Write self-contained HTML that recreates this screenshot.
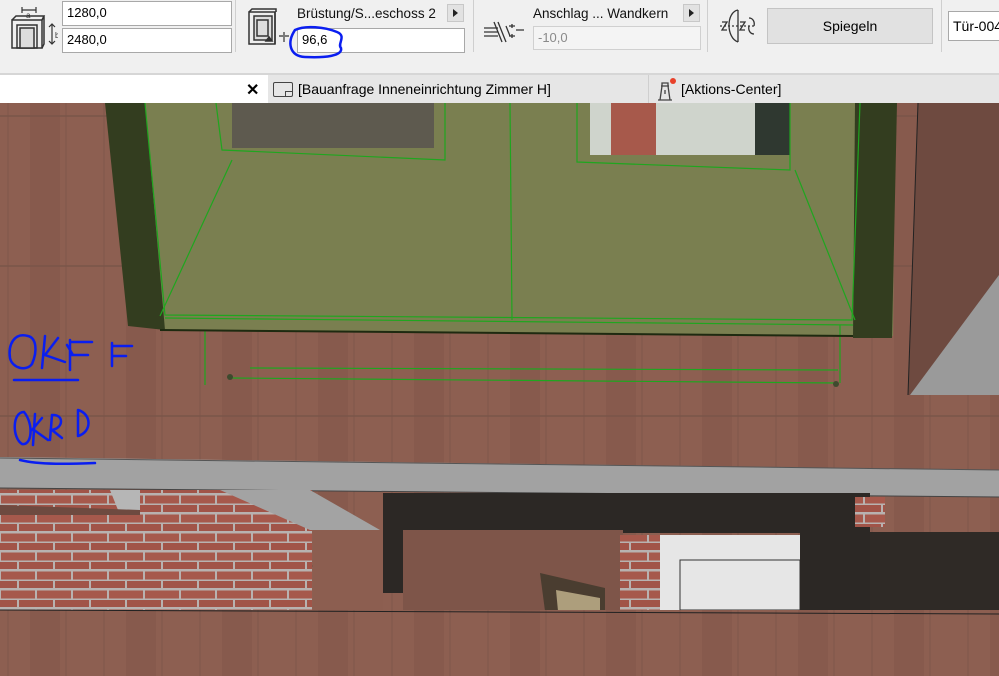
<!DOCTYPE html>
<html><head><meta charset="utf-8"><style>
body{margin:0;width:999px;height:676px;overflow:hidden;font-family:"Liberation Sans",sans-serif;background:#8a5d4f;position:relative}
.a{position:absolute}
.f{position:absolute;background:#fff;border:1px solid #a8a8a8;font-size:13px;line-height:22px;padding-left:4px;box-sizing:border-box;color:#000}
.sep{position:absolute;top:0;width:1px;height:52px;background:#cfcfcf}
.lbl{position:absolute;font-size:13.5px;color:#111}
.arr{position:absolute;width:17px;height:18px;background:#e2e2e2;border:1px solid #c8c8c8;box-sizing:border-box}
.arr:after{content:"";position:absolute;left:5px;top:4px;border-left:5px solid #222;border-top:4px solid transparent;border-bottom:4px solid transparent}
</style></head><body>
<div class="a" style="left:0;top:0;width:999px;height:74px;background:#f0f0f0"></div>
<div class="a" style="left:0;top:73px;width:999px;height:2px;background:#d6d6d6"></div>
<svg class="a" style="left:8px;top:2px" width="50" height="48" viewBox="0 0 50 48" fill="none" stroke="#333" stroke-width="1.5">
<rect x="4" y="18" width="30" height="28" fill="#eee"/><rect x="9" y="23" width="20" height="23"/><rect x="12" y="26" width="14" height="20" fill="#ddd"/>
<path d="M4 18l4-4h28l-2 4M36 14v28l-2 4" /><path d="M14 8h14M14 5v6M28 5v6M44 22v20M41 25l3-3 3 3M41 39l3 3 3-3" stroke-width="1.2"/>
<text x="18" y="16" font-size="8" fill="#333" stroke="none">a</text><text x="47" y="36" font-size="8" fill="#333" stroke="none">b</text></svg>
<div class="f" style="left:62px;top:1px;width:170px;height:25px">1280,0</div>
<div class="f" style="left:62px;top:28px;width:170px;height:25px">2480,0</div>
<div class="sep" style="left:235px"></div>
<svg class="a" style="left:247px;top:8px" width="45" height="40" viewBox="0 0 45 40" fill="none" stroke="#333" stroke-width="1.5">
<rect x="2" y="4" width="26" height="32" fill="#eee"/><rect x="7" y="8" width="18" height="24" fill="#ddd"/><rect x="10" y="12" width="11" height="16"/>
<path d="M2 4l3-3h24v3M28 4v32" /><path d="M32 28h10M37 24v3M37 29v5" stroke-width="1.2"/><path d="M22 29l3 4h-6z" fill="#333"/></svg>
<div class="lbl" style="left:297px;top:6px">Brüstung/S...eschoss 2</div>
<div class="arr" style="left:447px;top:4px"></div>
<div class="f" style="left:297px;top:28px;width:168px;height:25px">96,6</div>
<svg class="a" style="left:285px;top:22px" width="65" height="40"><path d="M10 8 C20 3,40 5,52 10 C62 14,52 22,56 26 C58 34,40 36,20 35 C4 34,2 20,10 8Z" fill="none" stroke="#0a1ef0" stroke-width="2.5"/></svg>
<div class="sep" style="left:473px"></div>
<svg class="a" style="left:482px;top:16px" width="45" height="30" viewBox="0 0 45 30" fill="none" stroke="#333" stroke-width="1.3">
<path d="M2 12h14M2 16h14M2 20h14M12 6l8 20M16 6l8 20M24 10l4 10M30 8v4M27 10h6M30 18v4M27 20h6M34 14h8"/></svg>
<div class="lbl" style="left:533px;top:6px">Anschlag ... Wandkern</div>
<div class="arr" style="left:683px;top:4px"></div>
<div class="f" style="left:533px;top:26px;width:168px;height:24px;background:#f4f4f4;color:#8a8a8a;border-color:#d0d0d0">-10,0</div>
<div class="sep" style="left:707px"></div>
<svg class="a" style="left:718px;top:6px" width="45" height="40" viewBox="0 0 45 40" fill="none" stroke="#333" stroke-width="1.3">
<path d="M20 4 C8 6,8 32,20 36 M20 4v32"/><path d="M2 20h34" stroke-dasharray="2 2"/><path d="M4 16h5l-5 8h5M22 16h5l-5 8h5M31 12c4 0,6 4,5 8M36 28c-4 0-6-4-5-8"/></svg>
<div class="a" style="left:767px;top:8px;width:166px;height:36px;background:#e1e1e1;border:1px solid #c4c4c4;box-sizing:border-box;font-size:14px;line-height:34px;text-align:center">Spiegeln</div>
<div class="sep" style="left:941px"></div>
<div class="f" style="left:948px;top:11px;width:60px;height:30px;line-height:28px;font-size:14px">Tür-004</div>
<div class="a" style="left:0;top:75px;width:268px;height:28px;background:#fff"></div>
<div class="a" style="left:246px;top:80px;font-size:16px;font-weight:bold">✕</div>
<div class="a" style="left:268px;top:75px;width:731px;height:28px;background:#e6e6e6"></div>
<div class="a" style="left:648px;top:75px;width:1px;height:28px;background:#cfcfcf"></div>
<div class="a" style="left:273px;top:82px;width:20px;height:15px;border:1.5px solid #444;border-radius:2px;box-sizing:border-box"></div>
<div class="a" style="left:285px;top:91px;width:8px;height:6px;border-top:1.5px solid #444;border-left:1.5px solid #444;box-sizing:border-box"></div>
<div class="a" style="left:298px;top:81px;font-size:14px">[Bauanfrage Inneneinrichtung Zimmer H]</div>
<svg class="a" style="left:654px;top:78px" width="24" height="24" fill="none" stroke="#444" stroke-width="1.3"><path d="M4 22h14M6 22l2-14h6l2 14M7 8h8M8 8V5h6v3M11 12v4"/><circle cx="19" cy="3" r="3" fill="#e8412a" stroke="none"/></svg>
<div class="a" style="left:681px;top:81px;font-size:14px">[Aktions-Center]</div>
<svg class="a" style="left:0;top:103px" width="999" height="573" viewBox="0 103 999 573">
<defs>
<pattern id="wood" width="96" height="150" patternUnits="userSpaceOnUse"><rect width="96" height="150" fill="#8d5f51"/><rect x="30" width="30" height="150" fill="#875a4d"/><path d="M8 0v150M66 0v150" stroke="#7f574b" stroke-width="1"/><path d="M0 116h96" stroke="#7a5549" stroke-width="1.5"/></pattern>
<pattern id="brick" width="36" height="19" patternUnits="userSpaceOnUse"><rect width="36" height="19" fill="#b8b2b0"/><rect x="1" y="1.5" width="34" height="8" fill="#a6594c"/><rect x="-17" y="11" width="34" height="7" fill="#a15448"/><rect x="19" y="11" width="34" height="7" fill="#a15448"/></pattern>
</defs>
<rect x="0" y="103" width="999" height="573" fill="url(#wood)"/>
<polygon points="918,103 999,103 999,395 908,395" fill="#6e4a40"/>
<polygon points="999,275 999,395 910,395" fill="#9a9a9a"/>
<line x1="918" y1="103" x2="908" y2="395" stroke="#222"/>
<polygon points="105,103 895,103 893,336 160,330" fill="#7a7f50"/>
<polygon points="105,103 145,103 165,330 128,326" fill="#333d1f"/>
<polygon points="855,103 897,103 892,338 853,338" fill="#333d1f"/>
<rect x="232" y="103" width="202" height="45" fill="#5e5a4f"/>
<rect x="590" y="103" width="200" height="52" fill="#cfd4cc"/>
<rect x="611" y="103" width="45" height="52" fill="#a7594b"/>
<rect x="755" y="103" width="35" height="52" fill="#2f3830"/>
<g fill="none" stroke="#1fa61f" stroke-width="1.2">
<path d="M145 103L165 315L852 320L860 103M160 316L232 160M216 103L222 150L445 160L445 103M577 103L577 162L790 170L790 103M795 170L855 320M230 378L838 383M205 385L205 330M250 368L838 370M165 318L853 325M840 325L840 383M510 103L512 320"/>
</g>
<line x1="160" y1="330" x2="853" y2="336" stroke="#1e2a10" stroke-width="2"/>
<circle cx="230" cy="377" r="3" fill="#3e4a2e"/><circle cx="836" cy="384" r="3" fill="#3e4a2e"/>
<polygon points="0,457 999,470 999,497 0,488" fill="#a2a2a2"/>
<line x1="0" y1="458" x2="999" y2="470" stroke="#555"/>
<line x1="0" y1="488" x2="999" y2="497" stroke="#444"/>
<rect x="0" y="490" width="312" height="120" fill="url(#brick)"/>
<polygon points="110,490 140,490 140,515 118,510" fill="#b6b6b6"/>
<polygon points="0,505 140,510 140,515 0,515" fill="#6e4a40"/>
<polygon points="220,490 310,490 380,530 310,530" fill="#a3a3a3"/>
<rect x="313" y="530" width="70" height="80" fill="#8c5e50"/>
<rect x="383" y="493" width="455" height="40" fill="#2c2825"/>
<rect x="383" y="493" width="20" height="100" fill="#2c2825"/>
<polygon points="403,530 425,530 410,585 403,585" fill="#1f1c1a"/>
<rect x="403" y="530" width="220" height="80" fill="#7e5549"/>
<rect x="620" y="535" width="40" height="75" fill="url(#brick)"/>
<rect x="660" y="535" width="140" height="75" fill="#e6e6e6"/>
<rect x="680" y="560" width="120" height="50" fill="none" stroke="#333"/>
<polygon points="540,573 605,588 605,611 545,611" fill="#4a3d30"/>
<polygon points="556,590 600,598 600,611 558,611" fill="#ad9e7c"/>
<rect x="800" y="493" width="70" height="117" fill="#2c2825"/>
<rect x="855" y="497" width="30" height="30" fill="url(#brick)"/>
<rect x="870" y="532" width="129" height="80" fill="#2f2a26"/>
<rect x="0" y="610" width="999" height="66" fill="url(#wood)"/>
<line x1="0" y1="610" x2="999" y2="614" stroke="#222"/>
<g fill="none" stroke="#0a1ef0" stroke-width="2.5" stroke-linecap="round">
<path d="M28 336C14 332 8 345 10 358C12 368 26 372 32 364C38 350 36 338 28 336Z"/>
<path d="M45 336L42 368M58 338L45 355L65 362M67 345L73 355M70 340L70 370M70 342H92M70 355H88M112 343V366M112 346H132M112 356H126M14 380H78"/>
<path d="M24 412C12 412 12 438 22 444C32 446 34 424 24 412Z"/>
<path d="M35 414L33 445M32 430L42 418M34 430L48 440M52 415L50 440M52 415C64 414 64 428 52 430L62 438M78 410L78 436M78 410C92 414 92 432 78 436M20 460C40 465 70 464 95 463"/>
</g>
</svg>
</body></html>
